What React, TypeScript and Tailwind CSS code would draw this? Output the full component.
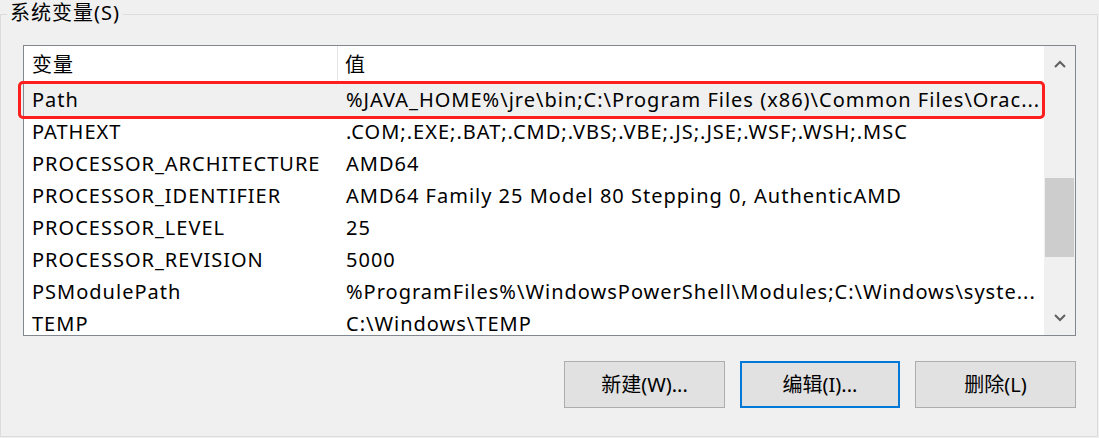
import React from "react";

const rows: { name: string; value: string }[] = [
  { name: "Path", value: "%JAVA_HOME%\\jre\\bin;C:\\Program Files (x86)\\Common Files\\Orac..." },
  { name: "PATHEXT", value: ".COM;.EXE;.BAT;.CMD;.VBS;.VBE;.JS;.JSE;.WSF;.WSH;.MSC" },
  { name: "PROCESSOR_ARCHITECTURE", value: "AMD64" },
  { name: "PROCESSOR_IDENTIFIER", value: "AMD64 Family 25 Model 80 Stepping 0, AuthenticAMD" },
  { name: "PROCESSOR_LEVEL", value: "25" },
  { name: "PROCESSOR_REVISION", value: "5000" },
  { name: "PSModulePath", value: "%ProgramFiles%\\WindowsPowerShell\\Modules;C:\\Windows\\syste..." },
  { name: "TEMP", value: "C:\\Windows\\TEMP" },
];

function Chevron({ down }: { down?: boolean }) {
  return (
    <svg width="12" height="8" viewBox="0 0 12 8" className={down ? "rotate-180" : ""}>
      <path d="M1 7 L6 2 L11 7" fill="none" stroke="#606060" strokeWidth="2" />
    </svg>
  );
}

export default function App() {
  return (
    <div
      className="w-[1099px] h-[438px] bg-[#f0f0f0] overflow-hidden text-[20px] text-black"
      style={{ fontFamily: '"Noto Sans", "Noto Sans CJK SC", sans-serif' }}
    >
      {/* group box */}
      <div className="relative mt-[14px] w-[1098px] h-[423px] border border-[#dcdcdc] pt-[30px] pl-[22px]">
        <div className="absolute -top-[16px] left-[6px] px-[3px] bg-[#f0f0f0] leading-[28px] tracking-[1px]">
          系统变量(S)
        </div>

        {/* list view */}
        <div className="w-[1053px] h-[291px] border border-[#828790] bg-white flex">
          <div className="w-[1020px] tracking-[1px]">
            <div className="flex h-[38px] items-center">
              <div className="w-[314px] h-full pl-[8px] flex items-center border-r border-[#e5e5e5]">变量</div>
              <div className="pl-[7px]">值</div>
            </div>
            {rows.map((r, i) => (
              <div
                key={r.name}
                className={`flex h-[32px] items-center whitespace-nowrap leading-[20px] ${i === 0 ? "bg-[#f0f0f0]" : ""}`}
              >
                <div className="w-[314px] shrink-0 pl-[8px]">{r.name}</div>
                <div className="pl-[8px]">{r.value}</div>
              </div>
            ))}
          </div>
          {/* scrollbar */}
          <div className="w-[31px] bg-[#f0f0f0] flex flex-col items-center">
            <div className="h-[34px] w-full flex items-center justify-center pt-[2px]">
              <Chevron />
            </div>
            <div className="h-[98px]" />
            <div className="h-[79px] w-[29px] bg-[#cdcdcd]" />
            <div className="flex-1" />
            <div className="h-[34px] w-full flex items-center justify-center">
              <Chevron down />
            </div>
          </div>
        </div>

        {/* buttons */}
        <div className="flex justify-end gap-[15px] mt-[25px] w-[1053px]">
          <button className="w-[161px] h-[47px] bg-[#e1e1e1] border border-[#adadad]">新建(W)...</button>
          <button className="w-[160px] h-[47px] bg-[#e1e1e1] border-2 border-[#0078d7]">编辑(I)...</button>
          <button className="w-[161px] h-[47px] bg-[#e1e1e1] border border-[#adadad]">删除(L)</button>
        </div>

        {/* red highlight around Path row */}
        <div className="absolute left-[17px] top-[66px] w-[1027px] h-[38px] border-[3px] border-[#ff1e1e] rounded-[5px]" />
      </div>
    </div>
  );
}
